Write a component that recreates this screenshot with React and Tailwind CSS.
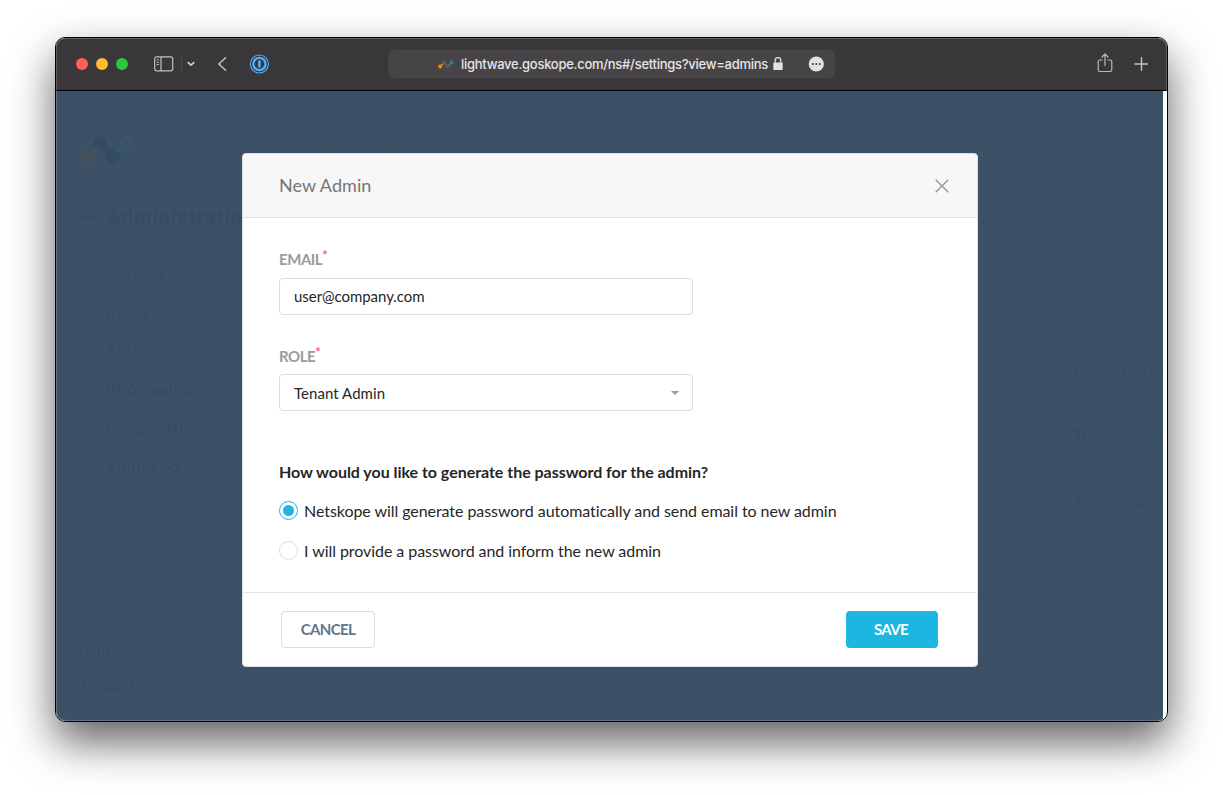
import React from "react";

const navItems = ["Roles", "SSO", "IP Allowlist", "Privacy Notice", "Audit Log"];
const roles = ["Restricted Admin", "Tenant Admin", "Tenant Admin"];

function BrandMark({ className, orange, navy, teal }) {
  return (
    <svg className={className} viewBox="0 0 54 30" fill="none">
      <path d="M7 22L20 9" stroke={orange} strokeWidth="5" />
      <circle cx="7.2" cy="22" r="6.8" fill={orange} />
      <path d="M34 21L42.500 12" stroke={teal} strokeWidth="5" />
      <circle cx="46" cy="8" r="4.900" stroke={teal} strokeWidth="3.600" />
      <path d="M20 8L33 22" stroke={navy} strokeWidth="7" />
      <circle cx="20" cy="8" r="6.600" fill={navy} />
      <circle cx="33" cy="22" r="6.900" fill={navy} />
    </svg>
  );
}

function TitleBar() {
  return (
    <header className="flex h-[53px] shrink-0 items-center border-b border-black bg-[#3a373a]">
      <div className="ml-5 flex gap-2">
        <span className="size-3 rounded-full bg-[#ff5f57]" />
        <span className="size-3 rounded-full bg-[#febc2e]" />
        <span className="size-3 rounded-full bg-[#28c840]" />
      </div>
      <svg className="ml-[26px] h-[16px] w-[20px]" viewBox="0 0 20 16" fill="none" stroke="#c3c1c3" strokeWidth="1.2">
        <rect x="0.7" y="0.8" width="18" height="14" rx="2" />
        <path d="M7 1V15" />
        <path d="M2.7 3.8H5M2.7 6.2H5M2.7 8.6H5" strokeWidth="1" />
      </svg>
      <span className="ml-[7px] h-[18px] w-px bg-[#4d4a4d]" />
      <svg className="ml-[5px] h-[6px] w-[8px]" viewBox="0 0 8 6" fill="none" stroke="#d0ced0" strokeWidth="1.7" strokeLinecap="round" strokeLinejoin="round">
        <path d="M1.2 1.7L4 4.2L6.8 1.7" />
      </svg>
      <svg className="ml-[22px] h-[16px] w-[10px]" viewBox="0 0 10 16" fill="none" stroke="#c3c1c3" strokeWidth="1.500" strokeLinecap="round" strokeLinejoin="round">
        <path d="M8.600 1.700L1.800 8L8.600 14.300" />
      </svg>
      <svg className="mb-px ml-[22px] size-5" viewBox="0 0 20 20" fill="none" stroke="#55aefa">
        <circle cx="10.400" cy="10" r="9" strokeWidth="1.100" />
        <circle cx="10.400" cy="10" r="6.100" strokeWidth="2.300" />
        <path d="M10.400 6.600V13.400" strokeWidth="2.600" />
      </svg>
      <div className="ml-[119px] flex h-7 w-[447px] items-center rounded-md bg-[#474447]">
        <BrandMark className="ml-[50px] h-[9px] w-[16px]" orange="#fb8304" navy="#595b62" teal="#1698bd" />
        <span className="ml-[7px] w-[306px] pt-[2px] font-['Inter',sans-serif] text-[13px] font-medium tracking-[-0.275px] whitespace-nowrap text-[#e6e4e6]">
          lightwave.goskope.com/ns#/settings?view=admins
        </span>
        <svg className="ml-[6px] h-[14px] w-[10px]" viewBox="0 0 10 14">
          <rect x="0.300" y="5.500" width="9.400" height="7.400" rx="1" fill="#e3e1e3" />
          <path d="M2.200 6V3.400a2.800 2.800 0 0 1 5.600 0V6" fill="none" stroke="#e3e1e3" strokeWidth="1.200" />
        </svg>
        <svg className="mb-px ml-[25px] size-4" viewBox="0 0 16 16">
          <circle cx="8.300" cy="8" r="7.600" fill="#e3e1e3" />
          <circle cx="4.800" cy="8" r="1.100" fill="#474447" />
          <circle cx="8.300" cy="8" r="1.100" fill="#474447" />
          <circle cx="11.800" cy="8" r="1.100" fill="#474447" />
        </svg>
      </div>
      <svg className="mb-[2px] ml-[262px] h-[20px] w-[16px]" viewBox="0 0 16 20" fill="none" stroke="#b9b7b9" strokeWidth="1.200" strokeLinecap="round" strokeLinejoin="round">
        <path d="M5 7H2.800C1.700 7 1.200 7.500 1.200 8.500V16.800C1.200 18 1.700 18.500 2.800 18.500H13.200C14.300 18.500 14.800 18 14.800 16.800V8.500C14.800 7.500 14.300 7 13.200 7H11" />
        <path d="M8 12.500V1.200M5 4L8 1L11 4" />
      </svg>
      <svg className="mb-px ml-[21px] size-[14px]" viewBox="0 0 14 14" stroke="#c3c1c3" strokeWidth="1.400" strokeLinecap="round">
        <path d="M7.500 0.700V13.300M1 7H14" />
      </svg>
    </header>
  );
}

function Backdrop() {
  return (
    <div className="flex h-full flex-1 overflow-hidden bg-[#3d5166] font-['Roboto',sans-serif] text-[#384b64]">
      <aside className="flex w-[265px] shrink-0 flex-col pl-6">
        <BrandMark className="mt-[44px] h-[30px] w-[54px]" orange="#46515d" navy="#354a65" teal="#33586f" />
        <div className="mt-[39px] flex h-[26px] items-center">
          <svg className="h-4 w-4" viewBox="0 0 16 16" fill="none" stroke="#384b64" strokeWidth="1.500">
            <path d="M15.500 8H1M8 1L1 8L8 15" />
          </svg>
          <span className="ml-[11px] text-[20px] font-medium tracking-[1.200px]">Administration</span>
        </div>
        <nav className="mt-[26px] flex flex-col pl-[26px] text-[16px] tracking-[0.650px]">
          <span className="flex h-[38.500px] items-center font-medium text-[#31506a]">Admins</span>
          {navItems.map((item) => (
            <span key={item} className="flex h-[38.500px] items-center">{item}</span>
          ))}
        </nav>
        <div className="mt-[148px] -ml-px flex flex-col text-[14px] tracking-[0.450px]">
          <span className="flex h-[34px] items-center">Help</span>
          <span className="flex h-[34px] items-center">Account</span>
        </div>
      </aside>
      <main className="flex-1 font-['Lato',sans-serif] text-[#384c61]">
        <p className="mt-[25px] text-[16px] leading-[22px] tracking-[-0.050px] text-[#3a4e63]">Administration &gt;</p>
        <p className="mt-[5px] text-[31px] leading-[36px]">Admins</p>
        <div className="mt-[127px] flex flex-col pl-[753px] whitespace-nowrap">
          <span className="mb-[14px] text-[12px] leading-[18px]">ROLE</span>
          {roles.map((role, i) => (
            <span key={i} className="flex h-[64.500px] items-center border-t border-[#3b4f64] text-[16px] tracking-[0.050px]">{role}</span>
          ))}
        </div>
      </main>
    </div>
  );
}

function FieldLabel({ children }) {
  return (
    <div className="flex h-5 text-[15px] leading-5 font-bold tracking-[-0.450px] text-[#9b9b9b]">
      {children}
      <span className="-mt-[4px] text-[13px] leading-5 text-[#ff5a5f]">*</span>
    </div>
  );
}

function RadioOption({ selected, children }) {
  return (
    <label className="flex h-10 items-center text-[16px] tracking-[-0.060px]">
      <span className={selected
        ? "flex size-[19px] items-center justify-center rounded-full border border-[#1db6e0]"
        : "flex size-[19px] items-center justify-center rounded-full border border-[#dedede]"}>
        {selected && <span className="size-[11px] rounded-full bg-[#1db6e0]" />}
      </span>
      <span className="ml-[6px] pt-[2px] whitespace-nowrap">{children}</span>
    </label>
  );
}

function NewAdminDialog() {
  return (
    <section className="absolute top-[62px] left-[186px] flex h-[514px] w-[736px] flex-col overflow-hidden rounded-[4px] border border-[#dcdfe2] bg-white font-['Lato',sans-serif] text-[#262626]">
      <div className="flex h-16 items-center justify-between border-b border-[#e0e0e0] bg-[#f7f7f7] pr-7 pl-9">
        <h1 className="text-[18px] tracking-[0.050px] text-[#757575]">New Admin</h1>
        <svg className="mt-px size-[14px]" viewBox="0 0 14 14" stroke="#929292" strokeWidth="1.300">
          <path d="M0.700 0.700L13.300 13.300M13.300 0.700L0.700 13.300" />
        </svg>
      </div>
      <div className="flex flex-1 flex-col px-9 pt-[31px]">
        <FieldLabel>EMAIL</FieldLabel>
        <div className="mt-[9px] flex h-[37px] w-[414px] items-center rounded-[4px] border border-[#dcdcdc] px-[14px] text-[15px] tracking-[-0.050px]">user@company.com</div>
        <div className="mt-[31px]"><FieldLabel>ROLE</FieldLabel></div>
        <div className="mt-[8px] flex h-[37px] w-[414px] items-center justify-between rounded-[4px] border border-[#dcdcdc] pr-[13px] pl-[14px] text-[15px] tracking-[0.050px]">
          <span className="pt-[2px]">Tenant Admin</span>
          <svg className="h-1 w-2" viewBox="0 0 8 4"><path d="M0 0H8L4 4Z" fill="#999" /></svg>
        </div>
        <h2 className="mt-[49px] text-[16px] leading-6 font-bold tracking-[-0.030px] whitespace-nowrap">How would you like to generate the password for the admin?</h2>
        <div className="mt-[6px] flex flex-col">
          <RadioOption selected>Netskope will generate password automatically and send email to new admin</RadioOption>
          <RadioOption>I will provide a password and inform the new admin</RadioOption>
        </div>
      </div>
      <div className="flex h-[74px] items-center justify-between border-t border-[#e3e3e3] pr-[39px] pl-[38px] text-[15px] font-bold tracking-[-0.600px]">
        <button className="h-[37px] w-[94px] rounded-[4px] border border-[#dcdcdc] text-[#62768a]">CANCEL</button>
        <button className="h-[37px] w-[92px] rounded-[4px] bg-[#1db6e0] pr-[2px] text-white">SAVE</button>
      </div>
    </section>
  );
}

export default function App() {
  return (
    <div className="h-[795px] w-[1223px] overflow-hidden bg-white pt-[37px] pl-[55px]">
      <div className="relative flex h-[685px] w-[1113px] flex-col overflow-visible rounded-[10px] shadow-[0_20px_44px_rgba(0,0,0,0.62)]">
        <div className="flex h-full flex-col overflow-hidden rounded-[10px] border border-black bg-white">
          <TitleBar />
          <div className="relative flex min-h-0 flex-1 pr-1">
            <Backdrop />
            <NewAdminDialog />
          </div>
        </div>
        <div className="pointer-events-none absolute inset-px rounded-[9px] border border-white/20" />
      </div>
    </div>
  );
}
